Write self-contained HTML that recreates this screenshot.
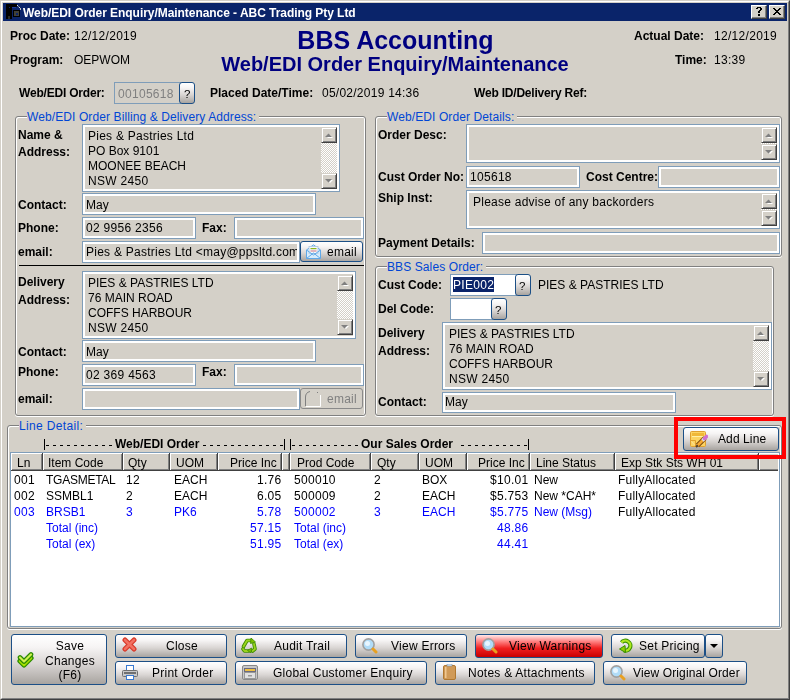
<!DOCTYPE html><html><head><meta charset="utf-8"><style>
*{box-sizing:content-box}
body{margin:0;width:790px;height:700px;position:relative;overflow:hidden;background:#d4d0c8;font-family:"Liberation Sans",sans-serif;font-size:12px;line-height:14px;color:#000}
div{position:absolute}
.t{white-space:nowrap;will-change:transform}
.ed{border:1px solid #7f9db9;box-shadow:inset 0 0 0 2px #fff;padding:1px}
.nd{box-shadow:none}
.sb{background:#d4d0c8;border:1px solid;border-color:#d4d0c8 #404040 #404040 #d4d0c8;padding:1px;box-shadow:inset 1px 1px 0 #fff,inset -1px -1px 0 #808080}
.trk{background-color:#fff;background-image:linear-gradient(45deg,#d4d0c8 25%,transparent 25%,transparent 75%,#d4d0c8 75%),linear-gradient(45deg,#d4d0c8 25%,transparent 25%,transparent 75%,#d4d0c8 75%);background-size:2px 2px;background-position:0 0,1px 1px}
.gb{border:1px solid #808080;border-radius:3px;box-shadow:0 1px 0 #fff, inset 1px 1px 0 #fff, inset -1px 0 0 #fff}
.gl{color:#0046d5;background:#d4d0c8;white-space:nowrap;letter-spacing:0.1px}
.hd{background:#d4d0c8;border-right:1px solid #404040;border-bottom:1px solid #404040;box-shadow:inset 1px 1px 0 #fff,inset -1px -1px 0 #808080}
.red{background:linear-gradient(#ffe8e8,#ff8080 30%,#f02020 60%,#c80000 100%)!important}
.btn{border:1px solid #1c4f86;border-radius:3px;background:linear-gradient(#ffffff,#f6f4f4 25%,#dad6d4 58%,#a8a4a0 100%)}
.dis{border-color:#8a8a8a!important;background:#d4d0c8!important}
</style></head><body><div style="left:0;top:0;width:788px;height:698px;border:1px solid;border-color:#d4d0c8 #404040 #404040 #d4d0c8"></div>
<div style="left:1px;top:1px;width:786px;height:696px;border:1px solid;border-color:#fff #808080 #808080 #fff"></div>
<div style="left:3px;top:3px;width:784px;height:18px;background:#0a246a"></div>
<div class="t" style="left:23px;top:6px;font-weight:bold;color:#fff;letter-spacing:-0.05px">Web/EDI Order Enquiry/Maintenance - ABC Trading Pty Ltd</div>
<svg style="position:absolute;left:3px;top:3px" width="18" height="18" viewBox="0 0 18 18"><g shape-rendering="crispEdges"><rect x="3" y="1" width="6" height="15" fill="#000"/><rect x="3" y="1" width="11" height="3" fill="#000"/><rect x="6" y="4" width="1" height="1" fill="#0a246a"/><rect x="9" y="4" width="4" height="1" fill="#1a3a9a"/><rect x="10" y="7" width="7" height="7" fill="#000"/><rect x="11" y="8" width="5" height="5" fill="#404038"/><rect x="13" y="10" width="2" height="2" fill="#0a246a"/><rect x="14" y="2" width="1" height="1" fill="#ddd"/><rect x="15" y="3" width="1" height="1" fill="#888"/><rect x="16" y="4" width="1" height="1" fill="#ddd"/><rect x="17" y="5" width="1" height="2" fill="#bbb"/><rect x="5" y="13" width="2" height="3" fill="#2a2a20"/></g></svg>
<div style="left:751px;top:5px;width:14px;height:12px;background:#d4d0c8;border:1px solid;border-color:#fff #404040 #404040 #fff;box-shadow:inset -1px -1px 0 #808080"></div>
<div style="left:769px;top:5px;width:14px;height:12px;background:#d4d0c8;border:1px solid;border-color:#fff #404040 #404040 #fff;box-shadow:inset -1px -1px 0 #808080"></div>
<svg style="position:absolute;left:756px;top:7px" width="6" height="9" viewBox="0 0 6 9"><g fill="#000" shape-rendering="crispEdges"><rect x="1" y="0" width="1" height="1"/><rect x="2" y="0" width="1" height="1"/><rect x="3" y="0" width="1" height="1"/><rect x="4" y="0" width="1" height="1"/><rect x="0" y="1" width="1" height="1"/><rect x="1" y="1" width="1" height="1"/><rect x="4" y="1" width="1" height="1"/><rect x="5" y="1" width="1" height="1"/><rect x="4" y="2" width="1" height="1"/><rect x="5" y="2" width="1" height="1"/><rect x="3" y="3" width="1" height="1"/><rect x="4" y="3" width="1" height="1"/><rect x="2" y="4" width="1" height="1"/><rect x="3" y="4" width="1" height="1"/><rect x="2" y="5" width="1" height="1"/><rect x="3" y="5" width="1" height="1"/><rect x="2" y="7" width="1" height="1"/><rect x="3" y="7" width="1" height="1"/><rect x="2" y="8" width="1" height="1"/><rect x="3" y="8" width="1" height="1"/></g></svg>
<svg style="position:absolute;left:773px;top:8px" width="8" height="7" viewBox="0 0 8 7"><g fill="#000" shape-rendering="crispEdges"><rect x="0" y="0" width="1" height="1"/><rect x="1" y="0" width="1" height="1"/><rect x="6" y="0" width="1" height="1"/><rect x="7" y="0" width="1" height="1"/><rect x="1" y="1" width="1" height="1"/><rect x="2" y="1" width="1" height="1"/><rect x="5" y="1" width="1" height="1"/><rect x="6" y="1" width="1" height="1"/><rect x="2" y="2" width="1" height="1"/><rect x="3" y="2" width="1" height="1"/><rect x="4" y="2" width="1" height="1"/><rect x="5" y="2" width="1" height="1"/><rect x="3" y="3" width="1" height="1"/><rect x="4" y="3" width="1" height="1"/><rect x="2" y="4" width="1" height="1"/><rect x="3" y="4" width="1" height="1"/><rect x="4" y="4" width="1" height="1"/><rect x="5" y="4" width="1" height="1"/><rect x="1" y="5" width="1" height="1"/><rect x="2" y="5" width="1" height="1"/><rect x="5" y="5" width="1" height="1"/><rect x="6" y="5" width="1" height="1"/><rect x="0" y="6" width="1" height="1"/><rect x="1" y="6" width="1" height="1"/><rect x="6" y="6" width="1" height="1"/><rect x="7" y="6" width="1" height="1"/></g></svg>
<div class="t" style="left:10px;top:29px;font-weight:bold;">Proc Date:</div>
<div class="t" style="left:74px;top:29px;letter-spacing:0.3px;">12/12/2019</div>
<div class="t" style="left:10px;top:53px;font-weight:bold;">Program:</div>
<div class="t" style="left:74px;top:53px;">OEPWOM</div>
<div class="t" style="left:0;width:790px;text-align:center;top:26px;font-weight:bold;font-size:25px;line-height:28px;color:#000080;padding-left:1px;box-sizing:border-box">BBS Accounting</div>
<div class="t" style="left:0;width:790px;text-align:center;top:52px;font-weight:bold;font-size:20px;line-height:24px;color:#000080">Web/EDI Order Enquiry/Maintenance</div>
<div class="t" style="right:86px;top:29px;font-weight:bold;">Actual Date:</div>
<div class="t" style="left:714px;top:29px;letter-spacing:0.3px;">12/12/2019</div>
<div class="t" style="right:83px;top:53px;font-weight:bold;">Time:</div>
<div class="t" style="left:714px;top:53px;letter-spacing:0.3px;">13:39</div>
<div class="t" style="left:19px;top:86px;font-weight:bold;letter-spacing:-0.2px">Web/EDI Order:</div>
<div class="ed nd" style="left:114px;top:82px;width:63px;height:18px;background:#d4d0c8"></div>
<div class="t" style="left:118px;top:87px;color:#808080;letter-spacing:0.3px;">00105618</div>
<div class="btn" style="left:179px;top:82px;width:14px;height:20px"><div class="t" style="left:4px;top:4px;font-size:11.5px">?</div></div>
<div class="t" style="left:210px;top:86px;font-weight:bold;">Placed Date/Time:</div>
<div class="t" style="left:322px;top:86px;letter-spacing:0.25px">05/02/2019 14:36</div>
<div class="t" style="left:474px;top:86px;font-weight:bold;letter-spacing:-0.2px">Web ID/Delivery Ref:</div>
<div class="gb" style="left:15px;top:116px;width:349px;height:298px"></div>
<div class="gl" style="left:27px;top:110px;padding:0 3px 0 0">Web/EDI Order Billing &amp; Delivery Address:</div>
<div class="t" style="left:18px;top:128px;font-weight:bold;">Name &amp;</div>
<div class="t" style="left:18px;top:145px;font-weight:bold;">Address:</div>
<div class="ed" style="left:82px;top:124px;width:254px;height:64px;background:#d4d0c8"></div>
<div class="t" style="left:88px;top:129px;letter-spacing:0.25px">Pies &amp; Pastries Ltd</div>
<div class="t" style="left:88px;top:144px;">PO Box 9101</div>
<div class="t" style="left:88px;top:159px;">MOONEE BEACH</div>
<div class="t" style="left:88px;top:174px;letter-spacing:0.3px;">NSW 2450</div>
<div class="sb" style="left:321px;top:127px;width:12px;height:12px"></div>
<svg style="position:absolute;left:325px;top:133px" width="8" height="5" viewBox="0 0 8 5"><path d="M1 4 L4 1 L7 4 Z" fill="#fff" transform="translate(1,1)"/><path d="M0 4 L3.5 0.5 L7 4 Z" fill="#808080"/></svg>
<div class="trk" style="left:321px;top:143px;width:16px;height:30px"></div>
<div class="sb" style="left:321px;top:173px;width:12px;height:12px"></div>
<svg style="position:absolute;left:325px;top:179px" width="8" height="5" viewBox="0 0 8 5"><path d="M1 0 L4 3 L7 0 Z" fill="#fff" transform="translate(1,1)"/><path d="M0 0 L3.5 3.5 L7 0 Z" fill="#808080"/></svg>
<div class="t" style="left:18px;top:198px;font-weight:bold;">Contact:</div>
<div class="ed" style="left:82px;top:193px;width:230px;height:18px;background:#d4d0c8"></div>
<div class="t" style="left:86px;top:198px;">May</div>
<div class="t" style="left:18px;top:221px;font-weight:bold;">Phone:</div>
<div class="ed" style="left:82px;top:217px;width:110px;height:18px;background:#d4d0c8"></div>
<div class="t" style="left:86px;top:221px;letter-spacing:0.3px;">02 9956 2356</div>
<div class="t" style="left:202px;top:221px;font-weight:bold;">Fax:</div>
<div class="ed" style="left:234px;top:217px;width:126px;height:18px;background:#d4d0c8"></div>
<div class="t" style="left:18px;top:245px;font-weight:bold;">email:</div>
<div class="ed" style="left:82px;top:241px;width:214px;height:18px;background:#d4d0c8"></div>
<div class="t" style="left:86px;top:245px;letter-spacing:0.25px;width:211px;overflow:hidden">Pies &amp; Pastries Ltd &lt;may@ppsltd.com</div>
<div class="btn" style="left:300px;top:241px;width:61px;height:19px"><div class="t" style="left:26px;top:3px;letter-spacing:0.25px">email</div></div>
<svg style="position:absolute;left:306px;top:244px" width="15" height="15" viewBox="0 0 15 15"><path d="M0.5 6 L7.5 0.8 L14.5 6 V14.5 H0.5 Z" fill="#d8ecfc" stroke="#60a8e8"/><rect x="3" y="2.5" width="9" height="7" fill="#f4f8fc" stroke="#b0c8e0" stroke-width="0.8"/><rect x="4.5" y="4" width="6" height="1.2" fill="#90b820"/><rect x="4.5" y="6.5" width="6" height="1" fill="#d07080"/><path d="M0.5 14.5 L7.5 9 L14.5 14.5 M0.5 6 L7.5 11 L14.5 6" fill="none" stroke="#60a8e8"/></svg>
<div style="left:19px;top:265px;width:345px;height:1px;background:#000"></div>
<div class="t" style="left:18px;top:275px;font-weight:bold;">Delivery</div>
<div class="t" style="left:18px;top:293px;font-weight:bold;">Address:</div>
<div class="ed" style="left:82px;top:271px;width:270px;height:64px;background:#d4d0c8"></div>
<div class="t" style="left:88px;top:276px;">PIES &amp; PASTRIES LTD</div>
<div class="t" style="left:88px;top:291px;">76 MAIN ROAD</div>
<div class="t" style="left:88px;top:306px;">COFFS HARBOUR</div>
<div class="t" style="left:88px;top:321px;letter-spacing:0.3px;">NSW 2450</div>
<div class="sb" style="left:337px;top:275px;width:12px;height:12px"></div>
<svg style="position:absolute;left:341px;top:281px" width="8" height="5" viewBox="0 0 8 5"><path d="M1 4 L4 1 L7 4 Z" fill="#fff" transform="translate(1,1)"/><path d="M0 4 L3.5 0.5 L7 4 Z" fill="#808080"/></svg>
<div class="trk" style="left:337px;top:291px;width:16px;height:28px"></div>
<div class="sb" style="left:337px;top:319px;width:12px;height:12px"></div>
<svg style="position:absolute;left:341px;top:325px" width="8" height="5" viewBox="0 0 8 5"><path d="M1 0 L4 3 L7 0 Z" fill="#fff" transform="translate(1,1)"/><path d="M0 0 L3.5 3.5 L7 0 Z" fill="#808080"/></svg>
<div class="t" style="left:18px;top:345px;font-weight:bold;">Contact:</div>
<div class="ed" style="left:82px;top:340px;width:230px;height:18px;background:#d4d0c8"></div>
<div class="t" style="left:86px;top:345px;">May</div>
<div class="t" style="left:18px;top:365px;font-weight:bold;">Phone:</div>
<div class="ed" style="left:82px;top:364px;width:110px;height:18px;background:#d4d0c8"></div>
<div class="t" style="left:86px;top:368px;letter-spacing:0.3px;">02 369 4563</div>
<div class="t" style="left:202px;top:365px;font-weight:bold;">Fax:</div>
<div class="ed" style="left:234px;top:364px;width:126px;height:18px;background:#d4d0c8"></div>
<div class="t" style="left:18px;top:392px;font-weight:bold;">email:</div>
<div class="ed" style="left:82px;top:388px;width:214px;height:18px;background:#d4d0c8"></div>
<div class="btn dis" style="left:300px;top:388px;width:61px;height:19px"><div class="t" style="left:26px;top:3px;color:#808080;letter-spacing:0.25px">email</div></div>
<svg style="position:absolute;left:304px;top:390px" width="18" height="18" viewBox="0 0 18 18"><path d="M1.5 16 V7 Q1.5 2.5 6 1.5" fill="none" stroke="#808080"/><path d="M2 16.5 H16.5 V5" fill="none" stroke="#fff"/><rect x="13" y="2" width="1" height="1" fill="#808080"/></svg>
<div class="gb" style="left:375px;top:116px;width:405px;height:139px"></div>
<div class="gl" style="left:387px;top:110px;padding:0 3px 0 0">Web/EDI Order Details:</div>
<div class="t" style="left:378px;top:128px;font-weight:bold;">Order Desc:</div>
<div class="ed" style="left:466px;top:124px;width:310px;height:35px;background:#d4d0c8"></div>
<div class="trk" style="left:761px;top:143px;width:16px;height:1px"></div>
<div class="sb" style="left:761px;top:127px;width:12px;height:12px"></div>
<svg style="position:absolute;left:765px;top:133px" width="8" height="5" viewBox="0 0 8 5"><path d="M1 4 L4 1 L7 4 Z" fill="#fff" transform="translate(1,1)"/><path d="M0 4 L3.5 0.5 L7 4 Z" fill="#808080"/></svg>
<div class="sb" style="left:761px;top:144px;width:12px;height:12px"></div>
<svg style="position:absolute;left:765px;top:150px" width="8" height="5" viewBox="0 0 8 5"><path d="M1 0 L4 3 L7 0 Z" fill="#fff" transform="translate(1,1)"/><path d="M0 0 L3.5 3.5 L7 0 Z" fill="#808080"/></svg>
<div class="t" style="left:378px;top:170px;font-weight:bold;">Cust Order No:</div>
<div class="ed" style="left:466px;top:166px;width:110px;height:18px;background:#d4d0c8"></div>
<div class="t" style="left:470px;top:170px;letter-spacing:0.3px;">105618</div>
<div class="t" style="left:586px;top:170px;font-weight:bold;">Cost Centre:</div>
<div class="ed" style="left:658px;top:166px;width:118px;height:18px;background:#d4d0c8"></div>
<div class="t" style="left:378px;top:191px;font-weight:bold;">Ship Inst:</div>
<div class="ed" style="left:466px;top:190px;width:310px;height:35px;background:#d4d0c8"></div>
<div class="t" style="left:473px;top:195px;letter-spacing:0.25px">Please advise of any backorders</div>
<div class="trk" style="left:761px;top:209px;width:16px;height:1px"></div>
<div class="sb" style="left:761px;top:193px;width:12px;height:12px"></div>
<svg style="position:absolute;left:765px;top:199px" width="8" height="5" viewBox="0 0 8 5"><path d="M1 4 L4 1 L7 4 Z" fill="#fff" transform="translate(1,1)"/><path d="M0 4 L3.5 0.5 L7 4 Z" fill="#808080"/></svg>
<div class="sb" style="left:761px;top:210px;width:12px;height:12px"></div>
<svg style="position:absolute;left:765px;top:216px" width="8" height="5" viewBox="0 0 8 5"><path d="M1 0 L4 3 L7 0 Z" fill="#fff" transform="translate(1,1)"/><path d="M0 0 L3.5 3.5 L7 0 Z" fill="#808080"/></svg>
<div class="t" style="left:378px;top:236px;font-weight:bold;">Payment Details:</div>
<div class="ed" style="left:482px;top:232px;width:294px;height:18px;background:#d4d0c8"></div>
<div class="gb" style="left:375px;top:266px;width:397px;height:148px"></div>
<div class="gl" style="left:387px;top:260px;padding:0 3px 0 0">BBS Sales Order:</div>
<div class="t" style="left:378px;top:278px;font-weight:bold;">Cust Code:</div>
<div class="ed" style="left:450px;top:274px;width:63px;height:18px;background:#fff"></div>
<div style="left:453px;top:277px;width:41px;height:15px;background:#0a246a"></div>
<div class="t" style="left:453px;top:278px;color:#fff;letter-spacing:0.3px;">PIE002</div>
<div class="btn" style="left:515px;top:274px;width:14px;height:20px"><div class="t" style="left:3px;top:4px;font-size:11.5px">?</div></div>
<div class="t" style="left:538px;top:278px;">PIES &amp; PASTRIES LTD</div>
<div class="t" style="left:378px;top:302px;font-weight:bold;">Del Code:</div>
<div class="ed" style="left:450px;top:298px;width:39px;height:18px;background:#fff"></div>
<div class="btn" style="left:491px;top:298px;width:14px;height:20px"><div class="t" style="left:3px;top:4px;font-size:11.5px">?</div></div>
<div class="t" style="left:378px;top:326px;font-weight:bold;">Delivery</div>
<div class="t" style="left:378px;top:344px;font-weight:bold;">Address:</div>
<div class="ed" style="left:442px;top:322px;width:326px;height:64px;background:#d4d0c8"></div>
<div class="t" style="left:449px;top:327px;">PIES &amp; PASTRIES LTD</div>
<div class="t" style="left:449px;top:342px;">76 MAIN ROAD</div>
<div class="t" style="left:449px;top:357px;">COFFS HARBOUR</div>
<div class="t" style="left:449px;top:372px;letter-spacing:0.3px;">NSW 2450</div>
<div class="sb" style="left:753px;top:325px;width:12px;height:12px"></div>
<svg style="position:absolute;left:757px;top:331px" width="8" height="5" viewBox="0 0 8 5"><path d="M1 4 L4 1 L7 4 Z" fill="#fff" transform="translate(1,1)"/><path d="M0 4 L3.5 0.5 L7 4 Z" fill="#808080"/></svg>
<div class="trk" style="left:753px;top:341px;width:16px;height:30px"></div>
<div class="sb" style="left:753px;top:371px;width:12px;height:12px"></div>
<svg style="position:absolute;left:757px;top:377px" width="8" height="5" viewBox="0 0 8 5"><path d="M1 0 L4 3 L7 0 Z" fill="#fff" transform="translate(1,1)"/><path d="M0 0 L3.5 3.5 L7 0 Z" fill="#808080"/></svg>
<div class="t" style="left:378px;top:395px;font-weight:bold;">Contact:</div>
<div class="ed" style="left:442px;top:392px;width:230px;height:17px;background:#d4d0c8"></div>
<div class="t" style="left:445px;top:395px;">May</div>
<div class="gb" style="left:7px;top:425px;width:773px;height:202px"></div>
<div class="gl" style="left:19px;top:419px;padding:0 3px 0 0;letter-spacing:0.35px">Line Detail:</div>
<div style="left:44px;top:439px;width:1px;height:11px;background:#000"></div>
<div style="left:46px;top:445px;width:3px;height:1px;background:#000"></div>
<div style="left:53px;top:445px;width:3px;height:1px;background:#000"></div>
<div style="left:60px;top:445px;width:3px;height:1px;background:#000"></div>
<div style="left:67px;top:445px;width:3px;height:1px;background:#000"></div>
<div style="left:74px;top:445px;width:3px;height:1px;background:#000"></div>
<div style="left:81px;top:445px;width:3px;height:1px;background:#000"></div>
<div style="left:88px;top:445px;width:3px;height:1px;background:#000"></div>
<div style="left:95px;top:445px;width:3px;height:1px;background:#000"></div>
<div style="left:102px;top:445px;width:3px;height:1px;background:#000"></div>
<div style="left:109px;top:445px;width:3px;height:1px;background:#000"></div>
<div class="t" style="left:115px;top:437px;font-weight:bold;">Web/EDI Order</div>
<div style="left:203px;top:445px;width:3px;height:1px;background:#000"></div>
<div style="left:210px;top:445px;width:3px;height:1px;background:#000"></div>
<div style="left:217px;top:445px;width:3px;height:1px;background:#000"></div>
<div style="left:224px;top:445px;width:3px;height:1px;background:#000"></div>
<div style="left:231px;top:445px;width:3px;height:1px;background:#000"></div>
<div style="left:238px;top:445px;width:3px;height:1px;background:#000"></div>
<div style="left:245px;top:445px;width:3px;height:1px;background:#000"></div>
<div style="left:252px;top:445px;width:3px;height:1px;background:#000"></div>
<div style="left:259px;top:445px;width:3px;height:1px;background:#000"></div>
<div style="left:266px;top:445px;width:3px;height:1px;background:#000"></div>
<div style="left:273px;top:445px;width:3px;height:1px;background:#000"></div>
<div style="left:280px;top:445px;width:3px;height:1px;background:#000"></div>
<div style="left:284px;top:439px;width:1px;height:11px;background:#000"></div>
<div style="left:290px;top:439px;width:1px;height:11px;background:#000"></div>
<div style="left:292px;top:445px;width:3px;height:1px;background:#000"></div>
<div style="left:299px;top:445px;width:3px;height:1px;background:#000"></div>
<div style="left:306px;top:445px;width:3px;height:1px;background:#000"></div>
<div style="left:313px;top:445px;width:3px;height:1px;background:#000"></div>
<div style="left:320px;top:445px;width:3px;height:1px;background:#000"></div>
<div style="left:327px;top:445px;width:3px;height:1px;background:#000"></div>
<div style="left:334px;top:445px;width:3px;height:1px;background:#000"></div>
<div style="left:341px;top:445px;width:3px;height:1px;background:#000"></div>
<div style="left:348px;top:445px;width:3px;height:1px;background:#000"></div>
<div style="left:355px;top:445px;width:3px;height:1px;background:#000"></div>
<div class="t" style="left:361px;top:437px;font-weight:bold;">Our Sales Order</div>
<div style="left:461px;top:445px;width:3px;height:1px;background:#000"></div>
<div style="left:468px;top:445px;width:3px;height:1px;background:#000"></div>
<div style="left:475px;top:445px;width:3px;height:1px;background:#000"></div>
<div style="left:482px;top:445px;width:3px;height:1px;background:#000"></div>
<div style="left:489px;top:445px;width:3px;height:1px;background:#000"></div>
<div style="left:496px;top:445px;width:3px;height:1px;background:#000"></div>
<div style="left:503px;top:445px;width:3px;height:1px;background:#000"></div>
<div style="left:510px;top:445px;width:3px;height:1px;background:#000"></div>
<div style="left:517px;top:445px;width:3px;height:1px;background:#000"></div>
<div style="left:524px;top:445px;width:3px;height:1px;background:#000"></div>
<div style="left:528px;top:439px;width:1px;height:11px;background:#000"></div>
<div style="left:10px;top:452px;width:768px;height:173px;border:1px solid #7f9db9;background:#fff"></div>
<div class="hd" style="left:11px;top:453px;width:31px;height:17px"></div>
<div class="hd" style="left:43px;top:453px;width:79px;height:17px"></div>
<div class="hd" style="left:123px;top:453px;width:46px;height:17px"></div>
<div class="hd" style="left:170px;top:453px;width:47px;height:17px"></div>
<div class="hd" style="left:218px;top:453px;width:63px;height:17px"></div>
<div class="hd" style="left:282px;top:453px;width:7px;height:17px"></div>
<div class="hd" style="left:290px;top:453px;width:80px;height:17px"></div>
<div class="hd" style="left:371px;top:453px;width:47px;height:17px"></div>
<div class="hd" style="left:419px;top:453px;width:47px;height:17px"></div>
<div class="hd" style="left:467px;top:453px;width:62px;height:17px"></div>
<div class="hd" style="left:530px;top:453px;width:84px;height:17px"></div>
<div class="hd" style="left:615px;top:453px;width:143px;height:17px"></div>
<div class="hd" style="left:759px;top:453px;width:19px;height:17px;border-right:0;box-shadow:inset 1px 1px 0 #fff,inset 0 -1px 0 #808080"></div>
<div class="t" style="left:17px;top:456px;">Ln</div>
<div class="t" style="left:48px;top:456px;">Item Code</div>
<div class="t" style="left:128px;top:456px;">Qty</div>
<div class="t" style="left:176px;top:456px;">UOM</div>
<div class="t" style="right:513px;top:456px;">Price Inc</div>
<div class="t" style="left:297px;top:456px;">Prod Code</div>
<div class="t" style="left:377px;top:456px;">Qty</div>
<div class="t" style="left:425px;top:456px;">UOM</div>
<div class="t" style="right:265px;top:456px;">Price Inc</div>
<div class="t" style="left:536px;top:456px;">Line Status</div>
<div class="t" style="left:621px;top:456px;">Exp Stk Sts WH 01</div>
<div class="t" style="left:14px;top:473px;letter-spacing:0.3px;">001</div>
<div class="t" style="left:46px;top:473px;"><span style="letter-spacing:-0.25px">TGASMETAL</span></div>
<div class="t" style="left:126px;top:473px;letter-spacing:0.3px;">12</div>
<div class="t" style="left:174px;top:473px;">EACH</div>
<div class="t" style="right:508.7px;top:473px;letter-spacing:0.3px;">1.76</div>
<div class="t" style="left:294px;top:473px;letter-spacing:0.3px;">500010</div>
<div class="t" style="left:374px;top:473px;">2</div>
<div class="t" style="left:422px;top:473px;">BOX</div>
<div class="t" style="right:261.70000000000005px;top:473px;letter-spacing:0.3px;">$10.01</div>
<div class="t" style="left:534px;top:473px;">New</div>
<div class="t" style="left:618px;top:473px;letter-spacing:0.2px">FullyAllocated</div>
<div class="t" style="left:14px;top:489px;letter-spacing:0.3px;">002</div>
<div class="t" style="left:46px;top:489px;">SSMBL1</div>
<div class="t" style="left:126px;top:489px;">2</div>
<div class="t" style="left:174px;top:489px;">EACH</div>
<div class="t" style="right:508.7px;top:489px;letter-spacing:0.3px;">6.05</div>
<div class="t" style="left:294px;top:489px;letter-spacing:0.3px;">500009</div>
<div class="t" style="left:374px;top:489px;">2</div>
<div class="t" style="left:422px;top:489px;">EACH</div>
<div class="t" style="right:261.70000000000005px;top:489px;letter-spacing:0.3px;">$5.753</div>
<div class="t" style="left:534px;top:489px;">New *CAH*</div>
<div class="t" style="left:618px;top:489px;letter-spacing:0.2px">FullyAllocated</div>
<div class="t" style="left:14px;top:505px;color:#0000ff;letter-spacing:0.3px;">003</div>
<div class="t" style="left:46px;top:505px;color:#0000ff;">BRSB1</div>
<div class="t" style="left:126px;top:505px;color:#0000ff;">3</div>
<div class="t" style="left:174px;top:505px;color:#0000ff;">PK6</div>
<div class="t" style="right:508.7px;top:505px;color:#0000ff;letter-spacing:0.3px;">5.78</div>
<div class="t" style="left:294px;top:505px;color:#0000ff;letter-spacing:0.3px;">500002</div>
<div class="t" style="left:374px;top:505px;color:#0000ff;">3</div>
<div class="t" style="left:422px;top:505px;color:#0000ff;">EACH</div>
<div class="t" style="right:261.70000000000005px;top:505px;color:#0000ff;letter-spacing:0.3px;">$5.775</div>
<div class="t" style="left:534px;top:505px;color:#0000ff;">New (Msg)</div>
<div class="t" style="left:618px;top:505px;letter-spacing:0.2px">FullyAllocated</div>
<div class="t" style="left:46px;top:521px;color:#0000ff;">Total (inc)</div>
<div class="t" style="right:508.7px;top:521px;color:#0000ff;letter-spacing:0.3px;">57.15</div>
<div class="t" style="left:294px;top:521px;color:#0000ff;">Total (inc)</div>
<div class="t" style="right:261.70000000000005px;top:521px;color:#0000ff;letter-spacing:0.3px;">48.86</div>
<div class="t" style="left:46px;top:537px;color:#0000ff;">Total (ex)</div>
<div class="t" style="right:508.7px;top:537px;color:#0000ff;letter-spacing:0.3px;">51.95</div>
<div class="t" style="left:294px;top:537px;color:#0000ff;">Total (ex)</div>
<div class="t" style="right:261.70000000000005px;top:537px;color:#0000ff;letter-spacing:0.3px;">44.41</div>
<div class="btn" style="left:683px;top:427px;width:94px;height:22px"><div class="t" style="left:34px;top:4px;letter-spacing:0.1px">Add Line</div></div>
<svg style="position:absolute;left:689px;top:430px" width="19" height="18" viewBox="0 0 19 18"><rect x="1.5" y="1.5" width="15" height="15" rx="1" fill="#fcd462" stroke="#e0a030"/><rect x="3" y="3" width="12" height="3" fill="#f0b838"/><rect x="3" y="6" width="12" height="1" fill="#fff0a8"/><path d="M2 10.5 H6.5 V16" fill="none" stroke="#e0a030"/><path d="M2.5 11.5 L5.5 15" stroke="#f8e0a0" stroke-width="1"/><path d="M8.5 15.5 L16 8" stroke="#7a4a10" stroke-width="4.6" stroke-linecap="butt"/><path d="M8.5 15.5 L16 8" stroke="#f8a830" stroke-width="2.6"/><path d="M13.5 10.5 L15.5 8.5" stroke="#d8e0f0" stroke-width="3.2"/><path d="M15.6 8.4 L17.5 6.5" stroke="#d070d0" stroke-width="3.6" stroke-linecap="round"/><path d="M7 17 L8.8 15.2" stroke="#504030" stroke-width="2"/></svg>
<div style="left:674px;top:417px;width:104px;height:34px;border:4px solid #f00"></div>
<div class="btn" style="left:11px;top:634px;width:94px;height:49px"><div class="t" style="left:0;width:94px;padding-left:22px;box-sizing:border-box;text-align:center;top:4px;line-height:14.5px;letter-spacing:0.25px">Save<br>Changes<br>(F6)</div></div>
<svg style="position:absolute;left:17px;top:650px" width="18" height="18" viewBox="0 0 18 18"><g fill="none" stroke-linejoin="round" stroke-linecap="round"><path d="M3 11 L7 15 L14 8" stroke="#2a8a00" stroke-width="5.2"/><path d="M3 11 L7 15 L14 8" stroke="#a8e000" stroke-width="2.6"/><path d="M3 7.5 L7 11.5 L14 4.5" stroke="#2a8a00" stroke-width="4.6"/><path d="M3 7.5 L7 11.5 L14 4.5" stroke="#d0f050" stroke-width="2.2"/></g></svg>
<div class="btn" style="left:115px;top:634px;width:110px;height:22px"><div class="t" style="left:50px;top:4px;letter-spacing:0.25px">Close</div></div>
<svg style="position:absolute;left:122px;top:637px" width="16" height="16" viewBox="0 0 16 16"><path d="M3 3 L12 12 M12 3 L3 12" stroke="#d83a2a" stroke-width="5" stroke-linecap="round"/><path d="M3 3 L12 12 M12 3 L3 12" stroke="#f27060" stroke-width="2.5" stroke-linecap="round"/></svg>
<div class="btn" style="left:115px;top:661px;width:110px;height:22px"><div class="t" style="left:36px;top:4px;letter-spacing:0.25px">Print Order</div></div>
<svg style="position:absolute;left:122px;top:665px" width="16" height="15" viewBox="0 0 16 15"><rect x="4.5" y="0.5" width="7" height="5" fill="#fff" stroke="#3a7ad0"/><rect x="0.5" y="5.5" width="15" height="6" rx="1" fill="#c8c8c8" stroke="#707070"/><rect x="2" y="7" width="12" height="2" fill="#707070"/><rect x="4.5" y="10.5" width="7" height="4" fill="#fff" stroke="#3a7ad0"/></svg>
<div class="btn" style="left:235px;top:634px;width:110px;height:22px"><div class="t" style="left:38px;top:4px;letter-spacing:0.25px">Audit Trail</div></div>
<svg style="position:absolute;left:241px;top:638px" width="16" height="15" viewBox="0 0 16 15"><g stroke-linecap="round" stroke-linejoin="round" fill="none"><path d="M2.5 8.5 L6 2.5 L10 2.5" stroke="#3f8c00" stroke-width="3.6"/><path d="M13 6 L14 11 L11.5 13" stroke="#3f8c00" stroke-width="3.6"/><path d="M8 13 L3.5 13 L2 11" stroke="#3f8c00" stroke-width="3.6"/><path d="M2.5 8.5 L6 2.5 L10 2.5" stroke="#9ad41e" stroke-width="1.8"/><path d="M13 6 L14 11 L11.5 13" stroke="#9ad41e" stroke-width="1.8"/><path d="M8 13 L3.5 13 L2 11" stroke="#9ad41e" stroke-width="1.8"/></g><path d="M10 0 L14.5 4 L9.5 5.5 Z" fill="#7cc000" stroke="#3f8c00" stroke-width="0.8"/><path d="M10.5 10 L10 15 L6.5 12.5 Z" fill="#7cc000" stroke="#3f8c00" stroke-width="0.8"/></svg>
<div class="btn" style="left:235px;top:661px;width:190px;height:22px"><div class="t" style="left:37px;top:4px;letter-spacing:0.25px">Global Customer Enquiry</div></div>
<svg style="position:absolute;left:242px;top:665px" width="16" height="15" viewBox="0 0 16 15"><rect x="0.5" y="0.5" width="15" height="14" rx="1.5" fill="#c8c8c8" stroke="#888"/><rect x="2.5" y="3.5" width="11" height="3" fill="#f0c040" stroke="#6a6a80" stroke-width="1"/><rect x="2.5" y="7.5" width="11" height="6" fill="#e0e0e0" stroke="#999"/><rect x="6" y="10" width="4" height="1.5" fill="#999"/></svg>
<div class="btn" style="left:355px;top:634px;width:110px;height:22px"><div class="t" style="left:35px;top:4px;letter-spacing:0.25px">View Errors</div></div>
<svg style="position:absolute;left:362px;top:638px" width="16" height="16" viewBox="0 0 16 16"><circle cx="6.5" cy="6.5" r="5.6" fill="#b0dcf8" stroke="#a0a0a0" stroke-width="1.6"/><circle cx="5.5" cy="5.5" r="2.5" fill="#e8f6ff"/><path d="M11 11 L14 14" stroke="#e8a020" stroke-width="3" stroke-linecap="round"/></svg>
<div class="btn" style="left:435px;top:661px;width:158px;height:22px"><div class="t" style="left:32px;top:4px;letter-spacing:0.25px">Notes &amp; Attachments</div></div>
<svg style="position:absolute;left:443px;top:664px" width="13" height="16" viewBox="0 0 13 16"><rect x="0.5" y="1.5" width="12" height="14" rx="1.5" fill="#d09a58" stroke="#b07830"/><rect x="2" y="3" width="1.5" height="11" fill="#f0c890"/><rect x="4" y="0" width="5" height="2" fill="#d8e8f8" stroke="#8090a0" stroke-width="0.6"/></svg>
<div class="btn red" style="left:475px;top:634px;width:126px;height:22px"><div class="t" style="left:33px;top:4px;letter-spacing:0.25px">View Warnings</div></div>
<svg style="position:absolute;left:482px;top:638px" width="16" height="16" viewBox="0 0 16 16"><circle cx="6.5" cy="6.5" r="5.6" fill="#b0dcf8" stroke="#a0a0a0" stroke-width="1.6"/><circle cx="5.5" cy="5.5" r="2.5" fill="#e8f6ff"/><path d="M11 11 L14 14" stroke="#e8a020" stroke-width="3" stroke-linecap="round"/></svg>
<div class="btn" style="left:603px;top:661px;width:142px;height:22px"><div class="t" style="left:29px;top:4px;letter-spacing:0.12px">View Original Order</div></div>
<svg style="position:absolute;left:610px;top:665px" width="16" height="16" viewBox="0 0 16 16"><circle cx="6.5" cy="6.5" r="5.6" fill="#b0dcf8" stroke="#a0a0a0" stroke-width="1.6"/><circle cx="5.5" cy="5.5" r="2.5" fill="#e8f6ff"/><path d="M11 11 L14 14" stroke="#e8a020" stroke-width="3" stroke-linecap="round"/></svg>
<div class="btn" style="left:611px;top:634px;width:92px;height:22px"><div class="t" style="left:27px;top:4px;letter-spacing:0.25px">Set Pricing</div></div>
<svg style="position:absolute;left:619px;top:638px" width="14" height="15" viewBox="0 0 14 15"><path d="M2.5 4.5 A5 5 0 1 1 5 12.5" fill="none" stroke="#3a9000" stroke-width="4.2"/><path d="M2.5 4.5 A5 5 0 1 1 5 12.5" fill="none" stroke="#b0e820" stroke-width="2"/><path d="M0.5 11 L6 7.5 L6.5 14.5 Z" fill="#90d000" stroke="#3a9000" stroke-width="1"/></svg>
<div class="btn" style="left:705px;top:634px;width:16px;height:22px"><div style="left:4px;top:9px;width:0;height:0;border-left:4px solid transparent;border-right:4px solid transparent;border-top:4px solid #000"></div></div></body></html>
